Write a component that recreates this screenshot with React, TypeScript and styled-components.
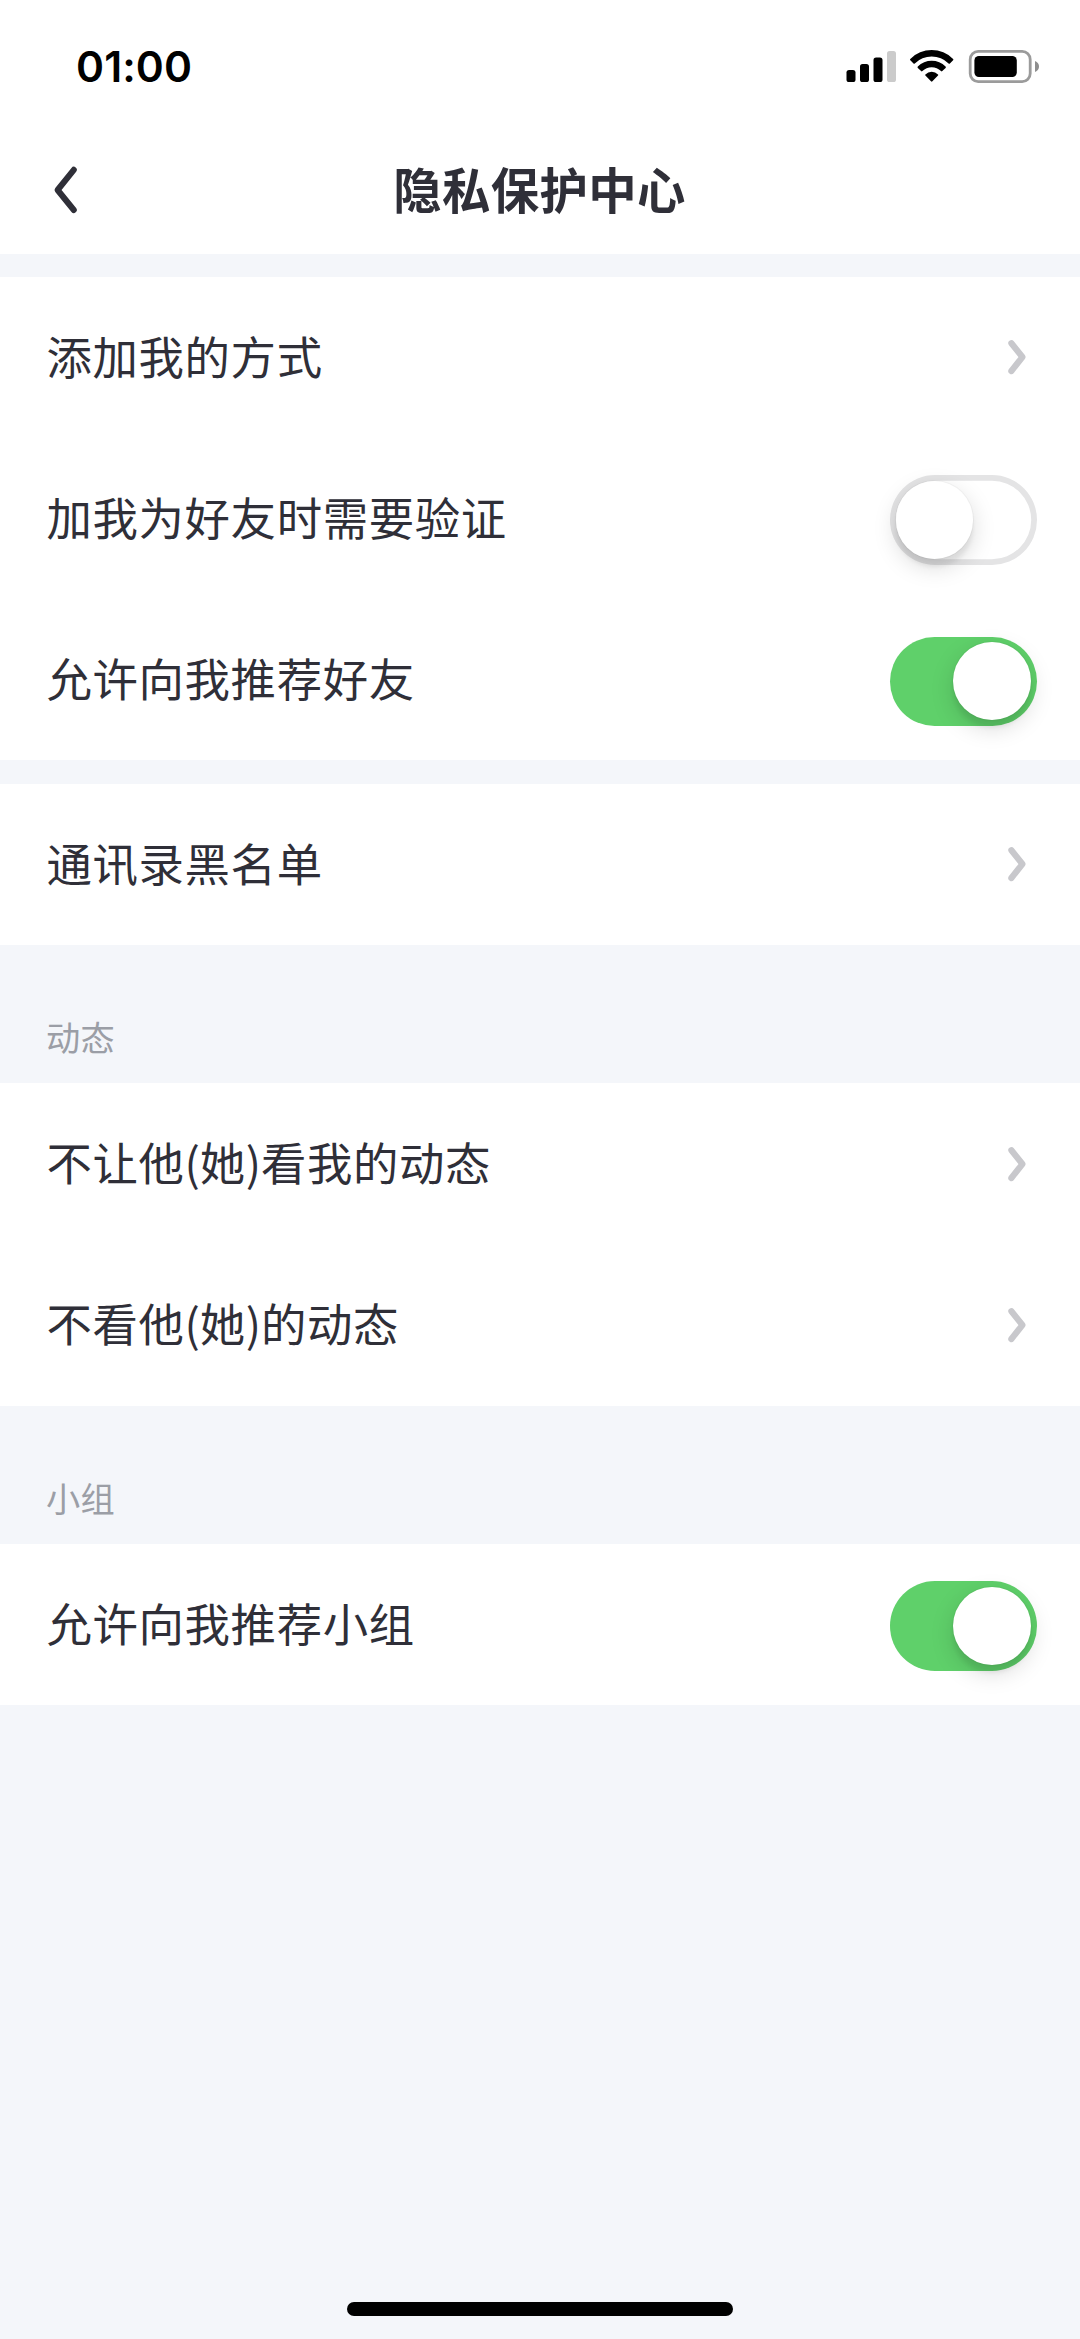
import React, { useState } from "react";
import styled, { createGlobalStyle } from "styled-components";

const GlobalStyle = createGlobalStyle`
  * { box-sizing: border-box; }
  html, body { margin: 0; padding: 0; background: #f4f6fa; }
  body { font-family: "Noto Sans CJK SC", "Noto Sans", sans-serif; color: #2f2f38; }
`;

const Screen = styled.div`
  display: flex;
  flex-direction: column;
  width: 1080px;
  height: 2339px;
  overflow: hidden;
  background: #f4f6fa;
`;

const Header = styled.header`
  display: flex;
  flex-direction: column;
  height: 253.6px;
  flex: none;
  background: #fff;
`;

const StatusBar = styled.div`
  display: flex;
  justify-content: space-between;
  height: 127px;
  padding: 0 41px 0 76px;
`;

const Clock = styled.time`
  padding-top: 7px;
  font-family: Inter, sans-serif;
  font-weight: 600;
  font-size: 42.5px;
  line-height: 120px;
  letter-spacing: 0.1px;
  color: #000;
`;

const StatusIcons = styled.svg`
  display: block;
  width: 200px;
  height: 40px;
  margin-top: 46px;
`;

const NavBar = styled.nav`
  display: grid;
  grid-template-columns: 120px 1fr 120px;
  align-items: center;
  height: 126.6px;
`;

const BackButton = styled.button`
  display: flex;
  align-items: center;
  height: 100%;
  padding: 0 0 0 49px;
  border: 0;
  background: none;
  svg { display: block; }
`;

const Title = styled.h1`
  margin: 0;
  padding: 0 1px 4px 0;
  text-align: center;
  font-size: 48.4px;
  letter-spacing: 0.4px;
  line-height: 72px;
  font-weight: 700;
`;

const Group = styled.section<{ $spaced?: boolean }>`
  flex: none;
  margin-top: ${(p) => (p.$spaced ? "23.1px" : "0")};
  background: #fff;
`;

const SectionLabel = styled.h2`
  display: flex;
  align-items: flex-end;
  flex: none;
  height: 138.24px;
  margin: 0;
  padding: 0 46px 21px;
  font-size: 34.2px;
  letter-spacing: 0.3px;
  line-height: 52px;
  font-weight: 400;
  color: #9b9ea6;
`;

const Row = styled.div`
  display: flex;
  align-items: center;
  justify-content: space-between;
  height: 161.28px;
  padding: 0 43.2px 0 46.4px;
`;

const RowLabel = styled.span`
  padding-bottom: 5px;
  font-size: 45.4px;
  letter-spacing: 0.66px;
  line-height: 68px;
  white-space: nowrap;
`;

const Paren = styled.span`
  letter-spacing: -0.2px;
`;

const Chevron = styled.svg`
  display: block;
  width: 24px;
  height: 42px;
  margin-right: 9px;
`;

const Track = styled.button<{ $on: boolean }>`
  display: flex;
  align-items: center;
  justify-content: ${(p) => (p.$on ? "flex-end" : "flex-start")};
  width: 147px;
  height: 89.3px;
  margin-top: 3px;
  padding: 0 5.8px;
  border: 0;
  border-radius: 45px;
  background: ${(p) => (p.$on ? "#5fd06a" : "#fff")};
  box-shadow: ${(p) => (p.$on ? "none" : "inset 0 0 0 5.8px #e4e4e5")};
`;

const Knob = styled.span`
  width: 77.8px;
  height: 77.8px;
  border-radius: 50%;
  background: #fff;
  box-shadow: 0 8px 23px rgba(0, 0, 0, 0.15), 0 8px 4px rgba(0, 0, 0, 0.06),
    0 0 0 1px rgba(0, 0, 0, 0.03);
`;

const HomeArea = styled.footer`
  display: flex;
  justify-content: center;
  margin-top: auto;
  padding-bottom: 23px;
`;

const HomeIndicator = styled.div`
  width: 386px;
  height: 14.4px;
  margin-left: 0.6px;
  border-radius: 8px;
  background: #000;
`;

function Label({ text }: { text: string }) {
  return (
    <RowLabel>
      {text.split(/([()])/).map((part, i) =>
        part === "(" || part === ")" ? <Paren key={i}>{part}</Paren> : part
      )}
    </RowLabel>
  );
}

function Link({ label }: { label: string }) {
  return (
    <Row>
      <Label text={label} />
      <Chevron viewBox="0 0 24 42" fill="none" stroke="#c8c8cc" strokeWidth="6.2" strokeLinecap="round" strokeLinejoin="round">
        <path d="M7.4 7.2 18.4 21 7.4 35" />
      </Chevron>
    </Row>
  );
}

function Toggle({ label, initial }: { label: string; initial: boolean }) {
  const [on, setOn] = useState(initial);
  return (
    <Row>
      <Label text={label} />
      <Track $on={on} role="switch" aria-checked={on} onClick={() => setOn(!on)}>
        <Knob />
      </Track>
    </Row>
  );
}

export default function App() {
  return (
    <Screen>
      <GlobalStyle />
      <Header>
        <StatusBar>
          <Clock>01:00</Clock>
          <StatusIcons viewBox="0 0 200 40">
            <rect x="7.5" y="24" width="9" height="12" rx="2.6" />
            <rect x="21" y="18" width="9" height="18" rx="2.6" />
            <rect x="34.5" y="11.5" width="9" height="24.5" rx="2.6" />
            <rect x="48" y="5" width="9" height="31" rx="2.6" fill="#cbcbcb" />
            <path d="M71.3 12.9a30.3 30.3 0 0 1 42.8 0q.6.6 0 1.3l-3.2 3.2q-.6.6-1.3 0a24 24 0 0 0-33.8 0q-.7.6-1.3 0l-3.2-3.2q-.6-.7 0-1.3z" />
            <path d="M78.8 20.6a19.7 19.7 0 0 1 27.8 0q.6.6 0 1.3l-3.3 3.2q-.6.6-1.3 0a13.3 13.3 0 0 0-18.6 0q-.7.6-1.3 0l-3.3-3.2q-.6-.7 0-1.3z" />
            <path d="M86.4 28.4a9 9 0 0 1 12.6 0q.6.6 0 1.2l-5.6 5.7q-.7.7-1.4 0l-5.6-5.7q-.6-.6 0-1.2z" />
            <rect x="131.2" y="5.4" width="60" height="30.2" rx="8" fill="none" stroke="#9b9b9b" strokeWidth="2.8" />
            <rect x="135.4" y="10" width="42.4" height="21" rx="4.5" />
            <path d="M196 15q4 1.6 4 5.5t-4 5.5z" fill="#8e8e8e" />
          </StatusIcons>
        </StatusBar>
        <NavBar>
          <BackButton aria-label="返回">
            <svg width="32" height="54" viewBox="0 0 32 54" fill="none" stroke="#2f2f38" strokeWidth="6" strokeLinecap="round" strokeLinejoin="round">
              <path d="M24.8 6.8 8.6 27 24.8 47" />
            </svg>
          </BackButton>
          <Title>隐私保护中心</Title>
        </NavBar>
      </Header>
      <Group $spaced>
        <Link label="添加我的方式" />
        <Toggle label="加我为好友时需要验证" initial={false} />
        <Toggle label="允许向我推荐好友" initial />
      </Group>
      <Group $spaced>
        <Link label="通讯录黑名单" />
      </Group>
      <SectionLabel>动态</SectionLabel>
      <Group>
        <Link label="不让他(她)看我的动态" />
        <Link label="不看他(她)的动态" />
      </Group>
      <SectionLabel>小组</SectionLabel>
      <Group>
        <Toggle label="允许向我推荐小组" initial />
      </Group>
      <HomeArea>
        <HomeIndicator />
      </HomeArea>
    </Screen>
  );
}
